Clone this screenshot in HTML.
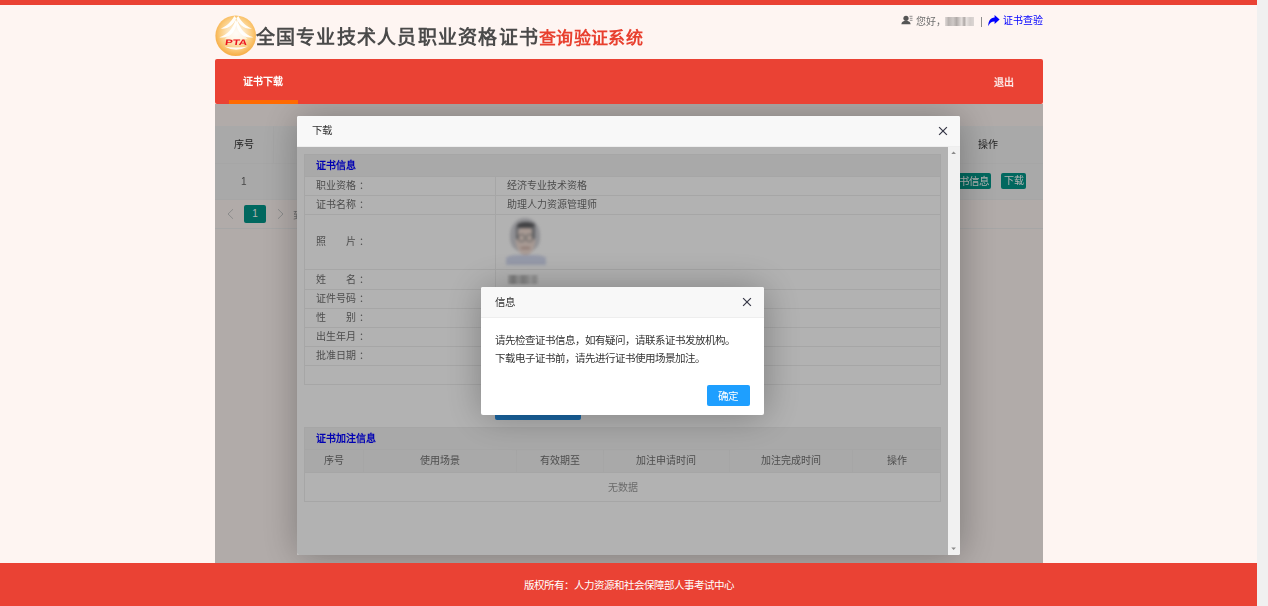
<!DOCTYPE html>
<html lang="zh-CN">
<head>
<meta charset="utf-8">
<style>
*{box-sizing:border-box;margin:0;padding:0}
html,body{width:1268px;height:606px;overflow:hidden}
body{opacity:.999;position:relative;background:#fef5f2;font-family:"Liberation Sans",sans-serif;font-size:10px;color:#333}
.abs{position:absolute}
#topbar{left:0;top:0;width:1257px;height:5px;background:#ea4234}
#vscroll{left:1257px;top:0;width:11px;height:606px;background:#f0f0f0}
#logo{left:215px;top:15px;width:41px;height:41px}
#title{left:255.5px;top:24.5px;font-size:19px;letter-spacing:1.25px;font-weight:bold;color:#4a4a4a;white-space:nowrap;line-height:26px}
#title span{color:#e8402f;font-size:17px;letter-spacing:.35px}
#userbar{left:900px;top:13px;white-space:nowrap;font-size:10px;line-height:14px;color:#666}
#nav{left:215px;top:59px;width:828px;height:44.5px;background:#ea4234;border-radius:2px}
#nav .item{position:absolute;left:28px;top:17px;color:#fff;font-weight:bold;font-size:10px;line-height:12px}
#nav .uline{position:absolute;left:14px;top:41px;width:69px;height:3.5px;background:#ff6a00}
#nav .exit{position:absolute;left:779px;top:17.5px;color:rgba(255,255,255,.88);font-size:10px;line-height:12px;font-weight:bold}
#content{left:215px;top:103.5px;width:828px;height:460px;background:#fef5f2;overflow:hidden}
#footer{left:0;top:563px;width:1257px;height:43px;background:#ea4234;color:#fff;text-align:center;font-size:10.5px;line-height:12px;padding-top:15.5px}
.c{text-align:center;color:#707070}
.t10{font-size:10px;line-height:12px;white-space:nowrap}
.btn-teal{height:16px;background:#009688;color:#fff;border-radius:2px;font-size:10px;line-height:16px;text-align:center;white-space:nowrap;overflow:hidden}
#modal{left:82px;top:12.3px;width:663px;height:439px;background:#fff;box-shadow:1px 1px 37px rgba(0,0,0,.3);border-radius:2px;overflow:hidden}
#modal>.ttl{position:absolute;left:0;top:0;width:663px;height:31px;background:#f8f8f8;border-bottom:1px solid #eee;font-size:10.5px;line-height:28.5px;padding-left:15px;color:#333}
#mbody{position:absolute;left:0;top:31px;width:651px;height:408px;background:#fff;overflow:hidden}
#mscroll{position:absolute;left:651px;top:31px;width:12px;height:408px;background:#f1f1f1}
.row{position:absolute;left:7px;width:637px;border-bottom:1px solid #eeeeee;border-left:1px solid #eeeeee;border-right:1px solid #eeeeee}
.lbl{position:absolute;left:10.8px;font-size:10px;line-height:12px;color:#707070;white-space:nowrap}
.val{position:absolute;left:201.9px;font-size:10px;line-height:12px;color:#707070;white-space:nowrap}
.sec{position:absolute;left:7px;width:637px;background:#f2f2f2;border:1px solid #eeeeee}
.sec b{position:absolute;left:10.6px;margin-top:-.8px;font-size:10px;line-height:12px;color:#0000ff}
#dialog{left:184px;top:140px;width:283px;height:128px;background:#fff;box-shadow:1px 1px 37px rgba(0,0,0,.3);border-radius:2px;overflow:hidden}
#dialog .ttl{position:absolute;left:0;top:0;width:283px;height:31px;background:#f8f8f8;border-bottom:1px solid #eee;font-size:10.5px;line-height:30px;padding-left:14px;color:#333}
#dialog .txt{position:absolute;left:14px;top:44px;font-size:10.5px;line-height:18px;color:#333;white-space:nowrap}
#dialog .ok{position:absolute;left:225.5px;top:98px;width:43px;height:21.5px;background:#1e9fff;border-radius:2px;color:#fff;font-size:10.5px;line-height:22.5px;text-align:center}
.ttl,.ok,#dialog .txt{filter:blur(0)}
.lbl i{font-style:normal;position:relative;left:2.8px}
.shade{position:absolute;left:0;top:0;right:0;bottom:0;background:rgba(0,0,0,.3)}
</style>
</head>
<body>
<div id="topbar" class="abs"></div>
<div id="vscroll" class="abs"></div>

<svg id="logo" class="abs" viewBox="0 0 41 41">
  <defs>
    <radialGradient id="lg" cx="51%" cy="45%" r="52%">
      <stop offset="0" stop-color="#fff8ee"/>
      <stop offset="0.4" stop-color="#fde6c0"/>
      <stop offset="0.78" stop-color="#fbc978"/>
      <stop offset="1" stop-color="#f7b24e"/>
    </radialGradient>
  </defs>
  <circle cx="20.7" cy="20.7" r="20.3" fill="url(#lg)"/>
  <path d="M21.3 4 C19.5 11 16 18 10 24 L32.6 24 C26.6 18 23.1 11 21.3 4Z" fill="#fff" opacity=".55"/>
  <path d="M19.3 1 C16 7 11.5 11.5 5.5 13.5 C12.5 14.6 18.6 10 21.3 3.2 Z" fill="#fff" opacity=".95"/>
  <path d="M 23.3 1.0 C 26.6 7.0 31.1 11.5 37.1 13.5 C 30.1 14.6 24.0 10.0 21.3 3.2 Z" fill="#fff" opacity=".95"/>
  <path d="M20.4 4.8 C18 13.5 12.5 20 4.3 22.3 C13.5 24 20.6 17.5 21.6 8 Z" fill="#fff" opacity=".95"/>
  <path d="M 22.2 4.8 C 24.6 13.5 30.1 20.0 38.3 22.3 C 29.1 24.0 22.0 17.5 21.0 8.0 Z" fill="#fff" opacity=".95"/>
  <path d="M9.3 31.5 Q21 33.6 33 31.5 Q21 37.8 9.3 31.5Z" fill="#fff" opacity=".9"/>
  <text x="10.2" y="30" transform="skewX(-8) translate(3.8 0)" textLength="22" lengthAdjust="spacingAndGlyphs" font-family="Liberation Sans" font-weight="bold" font-size="8" fill="#ec1520">PTA</text>
</svg>

<div id="title" class="abs">全国专业技术人员职业资格证书<span>查询验证系统</span></div>

<svg class="abs" style="left:901px;top:15px" width="12" height="10" viewBox="0 0 12 10">
  <circle cx="5" cy="3.3" r="2.6" fill="#555"/>
  <path d="M0.3 9.2 C0.8 6.5 2.5 5.8 5 5.8 C7.5 5.8 9.2 6.5 9.7 9.2 Z" fill="#555"/>
  <path d="M8.5 1.3H11.5M8.8 3.3H11.5M8.8 5.3H11.5" stroke="#777" stroke-width=".8"/>
</svg>
<div class="abs t10" style="left:916px;top:15.5px;color:#707070">您好，</div>
<div class="abs" style="left:945px;top:17px;width:29px;height:9px;background:linear-gradient(90deg,#e0d9d7 0,#b9b3b1 12%,#cfc9c7 28%,#b0aaa8 40%,#d6d0ce 52%,#e6e0de 58%,#aca6a4 66%,#e8e2e0 74%,#d2ccca 86%,#dcd6d4 100%);filter:blur(.7px)"></div>
<div class="abs" style="left:981px;top:16.5px;width:1px;height:10px;background:#8c8c8c"></div>
<svg class="abs" style="left:988px;top:14.5px" width="12" height="11.5" viewBox="0 0 12 11.5">
  <path d="M6.6 0 L11.6 4.6 L6.6 9 L6.6 6.4 C3.8 6.3 1.7 7.6 0.3 11.2 C0.2 6.4 2.2 2.9 6.6 2.6 Z" fill="#0000ff"/>
</svg>
<div class="abs t10" style="left:1003px;top:15px;color:#0000ff">证书查验</div>

<div id="nav" class="abs">
  <div class="item">证书下载</div>
  <div class="uline"></div>
  <div class="exit">退出</div>
</div>

<div id="content" class="abs">
  <!-- background table -->
  <div class="abs" style="left:0;top:22px;width:828px;height:38px;background:#f2f2f2;border-bottom:1px solid #eeeeee"></div>
  <div class="abs" style="left:58px;top:22px;width:1px;height:74px;background:#eeeeee"></div>
  <div class="abs" style="left:0;top:60px;width:828px;height:36px;background:#f2f2f2;border-bottom:1px solid #eeeeee"></div>
  <div class="abs" style="left:0;top:96px;width:828px;height:29px;border-bottom:1px solid #eeeeee"></div>
  <div class="abs t10" style="left:19px;top:35px;color:#333">序号</div>
  <div class="abs t10" style="left:763px;top:35px;color:#333">操作</div>
  <div class="abs t10" style="left:26px;top:72px;color:#666">1</div>
  <div class="abs btn-teal" style="left:728px;top:69.5px;width:48px;font-size:10.5px;text-align:right;padding-right:2.5px">证书信息</div>
  <div class="abs btn-teal" style="left:786px;top:69.5px;width:25px;">下载</div>
  <svg class="abs" style="left:12px;top:104px" width="8" height="13" viewBox="0 0 8 13"><path d="M6 1.2L1 6L6 10.8" fill="none" stroke="#c8c8c8" stroke-width="1"/></svg>
  <div class="abs" style="left:29px;top:101px;width:22px;height:18px;background:#009688;border-radius:2px;color:#fff;text-align:center;font-size:10px;line-height:18px">1</div>
  <svg class="abs" style="left:61.5px;top:104px" width="8" height="13" viewBox="0 0 8 13"><path d="M1 1.2L6 6L1 10.8" fill="none" stroke="#c8c8c8" stroke-width="1"/></svg>
  <div class="abs t10" style="left:78px;top:106px;color:#999">到</div>
  <div class="shade"></div>

  <div id="modal" class="abs">
    <div class="ttl">下载</div>
    <svg class="abs" style="left:641px;top:10.5px" width="10" height="10" viewBox="0 0 10 10"><path d="M1.1 1.1L8.9 8.9M8.9 1.1L1.1 8.9" stroke="#3a3b4a" stroke-width="1.25"/></svg>
    <div id="mbody">
      <div class="sec" style="top:7px;height:23px"><b style="top:5.5px">证书信息</b></div>
      <div class="row" style="top:30px;height:19px"><span class="lbl" style="top:3.5px">职业资格<i>：</i></span><span class="val" style="top:3.5px">经济专业技术资格</span></div>
      <div class="row" style="top:49px;height:19px"><span class="lbl" style="top:3.5px">证书名称<i>：</i></span><span class="val" style="top:3.5px">助理人力资源管理师</span></div>
      <div class="row" style="top:68px;height:55px"><span class="lbl" style="top:21px">照&emsp;&emsp;片<i>：</i></span>
        <div class="abs" style="left:200px;top:3px;width:42px;height:51px;filter:blur(1.4px)">
          <div class="abs" style="left:5px;top:0;width:30px;height:34px;border-radius:50% 50% 42% 42%;background:#cfcfd4"></div>
          <div class="abs" style="left:0.5px;top:37px;width:40px;height:10px;border-radius:30% 30% 0 0;background:#d6dcf2"></div>
          <div class="abs" style="left:11px;top:9px;width:19px;height:28px;border-radius:45% 45% 48% 48%;background:#f0dcd3"></div>
          <div class="abs" style="left:11.5px;top:4.5px;width:18px;height:6px;border-radius:50% 50% 10% 10%;background:#5e5e62"></div>
          <div class="abs" style="left:10.5px;top:8px;width:2.5px;height:13px;background:#8a8a8e"></div>
          <div class="abs" style="left:27px;top:8px;width:2.5px;height:13px;background:#8a8a8e"></div>
          <div class="abs" style="left:12.5px;top:16px;width:7.5px;height:8px;border:.9px solid #8c8c8c;border-radius:40%"></div>
          <div class="abs" style="left:20.5px;top:16px;width:7.5px;height:8px;border:.9px solid #8c8c8c;border-radius:40%"></div>
          <div class="abs" style="left:16px;top:29px;width:9px;height:2px;background:#c9a9a0"></div>
        </div>
      </div>
      <div class="row" style="top:123px;height:20px"><span class="lbl" style="top:4px">姓&emsp;&emsp;名<i>：</i></span>
        <div class="abs" style="left:203px;top:5px;width:30px;height:9px;background:linear-gradient(90deg,#d8d8d8 0,#b0b0b0 18%,#dcdcdc 35%,#bababa 50%,#d0d0d0 65%,#e8e8e8 75%,#cdcdcd 88%,#e8e8e8 100%);filter:blur(.8px)"></div></div>
      <div class="row" style="top:143px;height:19px"><span class="lbl" style="top:3.5px">证件号码<i>：</i></span></div>
      <div class="row" style="top:162px;height:19px"><span class="lbl" style="top:3.5px">性&emsp;&emsp;别<i>：</i></span></div>
      <div class="row" style="top:181px;height:19px"><span class="lbl" style="top:3.5px">出生年月<i>：</i></span></div>
      <div class="row" style="top:200px;height:19px"><span class="lbl" style="top:3.5px">批准日期<i>：</i></span></div>
      <div class="row" style="top:219px;height:19px"></div>
      <div class="abs" style="left:198px;top:30px;width:1px;height:170px;background:#eeeeee"></div>
      <div class="abs" style="left:198px;top:251px;width:86px;height:22.5px;background:#2592e8;border-radius:2px"></div>
      <div class="sec" style="top:280px;height:23px"><b style="top:5.5px">证书加注信息</b></div>
      <div class="row" style="top:303px;height:23px;background:#f2f2f2"></div>
      <div class="row" style="top:326px;height:29px"></div>
      <div class="abs" style="left:66px;top:303px;width:1px;height:23px;background:#eeeeee"></div>
      <div class="abs" style="left:219px;top:303px;width:1px;height:23px;background:#eeeeee"></div>
      <div class="abs" style="left:306px;top:303px;width:1px;height:23px;background:#eeeeee"></div>
      <div class="abs" style="left:431.5px;top:303px;width:1px;height:23px;background:#eeeeee"></div>
      <div class="abs" style="left:555px;top:303px;width:1px;height:23px;background:#eeeeee"></div>
      <div class="abs t10 c" style="left:8px;width:58px;top:308.5px">序号</div>
      <div class="abs t10 c" style="left:67px;width:152px;top:308.5px">使用场景</div>
      <div class="abs t10 c" style="left:220px;width:86px;top:308.5px">有效期至</div>
      <div class="abs t10 c" style="left:307px;width:124px;top:308.5px">加注申请时间</div>
      <div class="abs t10 c" style="left:432px;width:123px;top:308.5px">加注完成时间</div>
      <div class="abs t10 c" style="left:556px;width:88px;top:308.5px">操作</div>
      <div class="abs t10 c" style="left:8px;width:636px;top:335px;color:#999">无数据</div>
      <div class="shade"></div>

      <div id="dialog" class="abs">
        <div class="ttl">信息</div>
        <svg class="abs" style="left:261px;top:10.7px" width="10" height="10" viewBox="0 0 10 10"><path d="M1.1 1.1L8.9 8.9M8.9 1.1L1.1 8.9" stroke="#3a3b4a" stroke-width="1.25"/></svg>
        <div class="txt">请先检查证书信息，如有疑问，请联系证书发放机构。<br>下载电子证书前，请先进行证书使用场景加注。</div>
        <div class="ok">确定</div>
      </div>
    </div>
    <div id="mscroll">
      <svg class="abs" style="left:2.9px;top:4.5px" width="6" height="4"><path d="M0.3 2.9L2.6 0.5L4.9 2.9Z" fill="#8a8a8a"/></svg>
      <svg class="abs" style="left:2.9px;top:400px" width="6" height="4"><path d="M0.3 0.5L2.6 2.9L4.9 0.5Z" fill="#8a8a8a"/></svg>
    </div>
  </div>
</div>

<div id="footer" class="abs">版权所有：人力资源和社会保障部人事考试中心</div>

</body>
</html>
